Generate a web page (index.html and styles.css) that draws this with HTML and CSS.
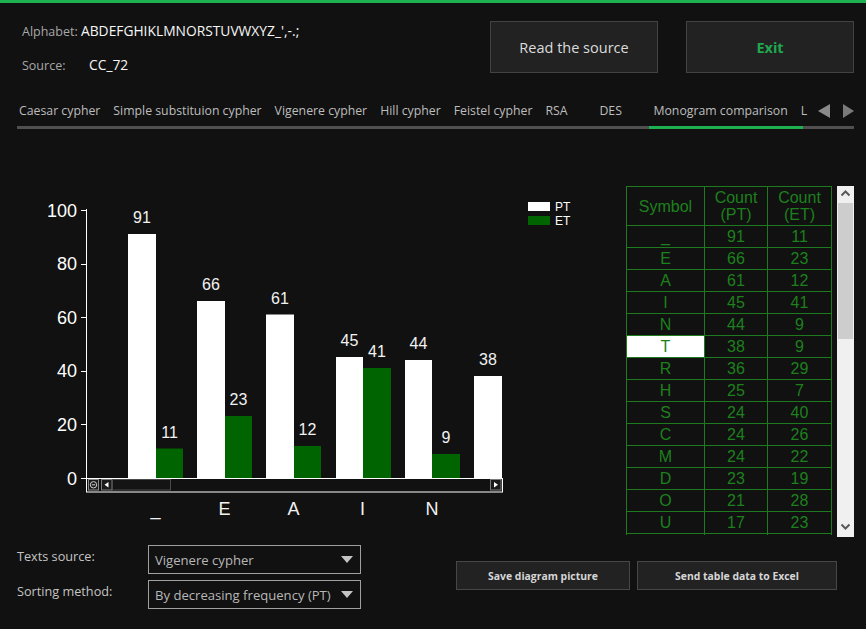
FILE: index.html
```html
<!DOCTYPE html>
<html>
<head>
<meta charset="utf-8">
<title>Monogram comparison</title>
<link rel="stylesheet" href="styles.css">
</head>
<body>
<div class="topline"></div>
<header class="header">
  <div class="info">
    <div class="info-row"><span class="lbl">Alphabet:</span>&nbsp;<span class="val">ABDEFGHIKLMNORSTUVWXYZ_',-.;</span></div>
    <div class="info-row second"><span class="lbl src-lbl">Source:</span><span class="val">CC_72</span></div>
  </div>
  <div class="top-buttons">
    <button class="btn-big">Read the source</button>
    <button class="btn-big exit">Exit</button>
  </div>
</header>
<nav class="tabs">
  <div class="tab-strip">
    <div class="tab">Caesar cypher</div>
    <div class="tab">Simple substituion cypher</div>
    <div class="tab">Vigenere cypher</div>
    <div class="tab">Hill cypher</div>
    <div class="tab">Feistel cypher</div>
    <div class="tab">RSA</div>
    <div class="tab">DES</div>
    <div class="tab">Monogram comparison</div>
    <div class="tab">L</div>
  </div>
  <div class="tab-arrows">
    <svg class="arrow" width="12" height="14" viewBox="0 0 12 14"><path d="M12 0 L0 7 L12 14 Z" fill="#8a8a8a"/></svg>
    <svg class="arrow right" width="11" height="14" viewBox="0 0 11 14"><path d="M0 0 L11 7 L0 14 Z" fill="#7a7a7a"/></svg>
  </div>
</nav>
<div class="tab-line"><div class="tab-active-line"></div></div>

<main class="main">
  <svg class="chart" width="626" height="351" viewBox="0 0 626 351">
    <g class="ylabels" font-family="Liberation Sans, Arial, sans-serif" font-size="18" fill="#ffffff" text-anchor="end">
      <text x="77" y="30.5">100</text>
      <text x="77" y="84.1">80</text>
      <text x="77" y="137.7">60</text>
      <text x="77" y="191.3">40</text>
      <text x="77" y="244.9">20</text>
      <text x="77" y="298.5">0</text>
    </g>
    <g stroke="#ffffff" stroke-width="1">
      <line x1="81" y1="24.5" x2="86" y2="24.5"/>
      <line x1="81" y1="78.5" x2="86" y2="78.5"/>
      <line x1="81" y1="131.5" x2="86" y2="131.5"/>
      <line x1="81" y1="185.5" x2="86" y2="185.5"/>
      <line x1="81" y1="238.5" x2="86" y2="238.5"/>
      <line x1="81" y1="292.5" x2="86" y2="292.5"/>
      <line x1="86.5" y1="23" x2="86.5" y2="306"/>
    </g>
    <g class="bars">
      <rect x="128" y="48" width="28" height="244" fill="#ffffff"/>
      <rect x="156" y="262.5" width="27" height="29.5" fill="#006400"/>
      <rect x="197" y="115" width="28" height="177" fill="#ffffff"/>
      <rect x="225" y="230" width="27" height="62" fill="#006400"/>
      <rect x="266" y="128.5" width="28" height="163.5" fill="#ffffff"/>
      <rect x="294" y="260" width="27" height="32" fill="#006400"/>
      <rect x="336" y="171" width="27" height="121" fill="#ffffff"/>
      <rect x="363" y="182" width="28" height="110" fill="#006400"/>
      <rect x="405" y="174" width="27" height="118" fill="#ffffff"/>
      <rect x="432" y="268" width="28" height="24" fill="#006400"/>
      <rect x="474" y="190" width="28" height="102" fill="#ffffff"/>
    </g>
    <g class="vlabels" font-family="Liberation Sans, Arial, sans-serif" font-size="16" fill="#f2f2f2" text-anchor="middle">
      <text x="142" y="37">91</text>
      <text x="169.5" y="251.5">11</text>
      <text x="211" y="104">66</text>
      <text x="238.5" y="219">23</text>
      <text x="280" y="117.5">61</text>
      <text x="307.5" y="249">12</text>
      <text x="349.5" y="160">45</text>
      <text x="377" y="171">41</text>
      <text x="418.5" y="163">44</text>
      <text x="446" y="257">9</text>
      <text x="488" y="179">38</text>
    </g>
    <g class="xlabels" font-family="Liberation Sans, Arial, sans-serif" font-size="18" fill="#f2f2f2" text-anchor="middle">
      <text x="155.5" y="329">_</text>
      <text x="224.5" y="329">E</text>
      <text x="293.5" y="329">A</text>
      <text x="362.5" y="329">I</text>
      <text x="432" y="329">N</text>
    </g>
    <g class="hscroll">
      <rect x="86.5" y="292.5" width="416" height="13.5" fill="#111111" stroke="#ffffff" stroke-width="1"/>
      <rect x="88.5" y="293.5" width="10" height="10.5" fill="#1a1a1a" stroke="#8a8a8a" stroke-width="1"/>
      <circle cx="93.5" cy="298.8" r="3.2" fill="none" stroke="#d0d0d0" stroke-width="1"/>
      <line x1="91.8" y1="298.8" x2="95.2" y2="298.8" stroke="#d0d0d0" stroke-width="1"/>
      <rect x="101.5" y="293.5" width="10.5" height="10.5" fill="#1a1a1a" stroke="#7a7a7a" stroke-width="1"/>
      <path d="M104.5 298.8 L108.5 296 L108.5 301.6 Z" fill="#ffffff"/>
      <rect x="112.5" y="293.5" width="58" height="10.5" fill="#141414" stroke="#4a4a4a" stroke-width="1"/>
      <rect x="490.5" y="293.5" width="10.5" height="10.5" fill="#1a1a1a" stroke="#7a7a7a" stroke-width="1"/>
      <path d="M494 296 L498 298.8 L494 301.6 Z" fill="#ffffff"/>
    </g>
    <g class="legend" font-family="Liberation Sans, Arial, sans-serif" font-size="12" fill="#ffffff">
      <rect x="528" y="16" width="22" height="9" fill="#ffffff"/>
      <text x="555" y="25">PT</text>
      <rect x="528" y="30" width="22" height="9" fill="#006400"/>
      <text x="555" y="39">ET</text>
    </g>
  </svg>

  <div class="table-wrap">
    <table class="data">
      <colgroup><col class="c1"><col class="c2"><col class="c3"></colgroup>
      <thead>
        <tr><th>Symbol</th><th>Count<br>(PT)</th><th>Count<br>(ET)</th></tr>
      </thead>
      <tbody>
        <tr><td class="us">_</td><td>91</td><td>11</td></tr>
        <tr><td>E</td><td>66</td><td>23</td></tr>
        <tr><td>A</td><td>61</td><td>12</td></tr>
        <tr><td>I</td><td>45</td><td>41</td></tr>
        <tr><td>N</td><td>44</td><td>9</td></tr>
        <tr><td class="sel">T</td><td>38</td><td>9</td></tr>
        <tr><td>R</td><td>36</td><td>29</td></tr>
        <tr><td>H</td><td>25</td><td>7</td></tr>
        <tr><td>S</td><td>24</td><td>40</td></tr>
        <tr><td>C</td><td>24</td><td>26</td></tr>
        <tr><td>M</td><td>24</td><td>22</td></tr>
        <tr><td>D</td><td>23</td><td>19</td></tr>
        <tr><td>O</td><td>21</td><td>28</td></tr>
        <tr><td>U</td><td>17</td><td>23</td></tr>
        <tr><td>&nbsp;</td><td>&nbsp;</td><td>&nbsp;</td></tr>
      </tbody>
    </table>
  </div>

  <div class="vscroll">
    <svg class="chev" width="17" height="14" viewBox="0 0 17 14"><path d="M4.5 9.5 L8.5 5.5 L12.5 9.5" fill="none" stroke="#5a5a5a" stroke-width="2"/></svg>
    <div class="thumb"></div>
    <div class="track-rest"></div>
    <svg class="chev" width="17" height="14" viewBox="0 0 17 14"><path d="M4.5 4.5 L8.5 8.5 L12.5 4.5" fill="none" stroke="#5a5a5a" stroke-width="2"/></svg>
  </div>
</main>

<footer class="bottom">
  <div class="form">
    <div class="form-row">
      <div class="flabel">Texts source:</div>
      <div class="combo"><span class="combo-text">Vigenere cypher</span>
        <svg class="combo-arrow" width="12" height="7" viewBox="0 0 12 7"><path d="M0 0 L12 0 L6 7 Z" fill="#c4c4c4"/></svg></div>
    </div>
    <div class="form-row second">
      <div class="flabel">Sorting method:</div>
      <div class="combo"><span class="combo-text">By decreasing frequency (PT)</span>
        <svg class="combo-arrow" width="12" height="7" viewBox="0 0 12 7"><path d="M0 0 L12 0 L6 7 Z" fill="#c4c4c4"/></svg></div>
    </div>
  </div>
  <div class="bottom-buttons">
    <button class="btn-small save">Save diagram picture</button>
    <button class="btn-small excel">Send table data to Excel</button>
  </div>
</footer>
</body>
</html>
```

FILE: styles.css
```css
* { box-sizing: border-box; }

html, body {
  margin: 0;
  padding: 0;
  background: #111111;
}

body {
  width: 866px;
  height: 629px;
  overflow: hidden;
  font-family: "Open Sans", "Noto Sans", sans-serif;
  color: #c8c8c8;
}

.topline {
  height: 3px;
  background: #1db24f;
}

/* header */
.header {
  display: flex;
  padding: 18px 12px 0 22px;
  height: 70px;
}

.info {
  font-size: 12.5px;
}

.info-row {
  height: 20px;
  line-height: 20px;
  white-space: nowrap;
}

.info-row.second {
  margin-top: 14px;
}

.lbl {
  color: #a8a8a8;
}

.src-lbl {
  display: inline-block;
  width: 67px;
}

.val {
  color: #f6f6f6;
  font-size: 13.8px;
}

.top-buttons {
  margin-left: auto;
  display: flex;
  gap: 28px;
}

.btn-big {
  width: 168px;
  height: 52px;
  background: #222222;
  border: 1px solid #434343;
  color: #dcdcdc;
  font-family: "Open Sans", "Noto Sans", sans-serif;
  font-size: 14.5px;
  padding: 0;
}

.btn-big.exit {
  color: #1fa84f;
  font-weight: bold;
}

/* tabs */
.tabs {
  display: flex;
  margin-top: 27px;
  padding-left: 15px;
  height: 26px;
}

.tab-strip {
  display: flex;
  width: 797px;
  overflow: hidden;
  white-space: nowrap;
}

.tab {
  flex-shrink: 0;
  min-width: 54px;
  height: 26px;
  line-height: 22px;
  padding: 0 9px 4px 4px;
  font-size: 12.29px;
  color: #bdbdbd;
}

.tab-arrows {
  display: flex;
  align-items: flex-start;
  padding-top: 4px;
  margin-left: 6px;
  gap: 13px;
}

.arrow {
  display: block;
}

.tab-line {
  margin-left: 17px;
  width: 837px;
  height: 3px;
  background: #505050;
}

.tab-active-line {
  margin-left: 632px;
  width: 154px;
  height: 3px;
  background: #1db24f;
}

/* main */
.main {
  display: flex;
  margin-top: 57px;
  height: 351px;
}

.chart {
  display: block;
  flex-shrink: 0;
}

.table-wrap {
  width: 206px;
  height: 349px;
  overflow: hidden;
  flex-shrink: 0;
}

.data {
  border-collapse: collapse;
  table-layout: fixed;
  width: 206px;
  font-family: "Liberation Sans", Arial, sans-serif;
  font-size: 16px;
  color: #1d801d;
}

.c1 { width: 78px; }
.c2 { width: 63px; }
.c3 { width: 64px; }

.data th,
.data td {
  border: 1px solid #1e7a1e;
  text-align: center;
  padding: 0;
  font-weight: normal;
}

.data th {
  height: 39px;
  line-height: 17px;
}

.data td {
  height: 22px;
  line-height: 20px;
}

.data td.sel {
  background: #ffffff;
}

.vscroll {
  margin-left: 5px;
  width: 17px;
  height: 351px;
  background: #f0f0f0;
  display: flex;
  flex-direction: column;
  align-items: center;
  flex-shrink: 0;
}

.chev {
  display: block;
  flex-shrink: 0;
}

.thumb {
  margin-top: 3px;
  width: 15px;
  height: 136px;
  background: #cdcdcd;
}

.track-rest {
  flex: 1;
}

.vscroll .chev:last-child {
  margin-bottom: 3px;
}

/* bottom */
.bottom {
  display: flex;
  margin-top: 8px;
  padding-left: 17px;
}

.form-row {
  display: flex;
  height: 29px;
}

.form-row.second {
  margin-top: 6px;
}

.flabel {
  width: 131px;
  line-height: 22px;
  font-size: 12.7px;
  color: #c4c4c4;
}

.combo {
  width: 213px;
  height: 29px;
  border: 1px solid #a0a0a0;
  display: flex;
  align-items: center;
  padding: 0 7px 0 6px;
}

.combo-text {
  font-size: 13.1px;
  color: #b8b8b8;
  white-space: nowrap;
}

.combo-arrow {
  margin-left: auto;
  display: block;
}

.bottom-buttons {
  display: flex;
  gap: 7px;
  margin-left: 95px;
  margin-top: 16px;
}

.btn-small {
  height: 29px;
  background: #222222;
  border: 1px solid #474747;
  color: #d6d6d6;
  font-family: "Open Sans", "Noto Sans", sans-serif;
  font-size: 10.4px;
  font-weight: bold;
  padding: 0;
}

.btn-small.save { width: 174px; }
.btn-small.excel { width: 200px; }
```
